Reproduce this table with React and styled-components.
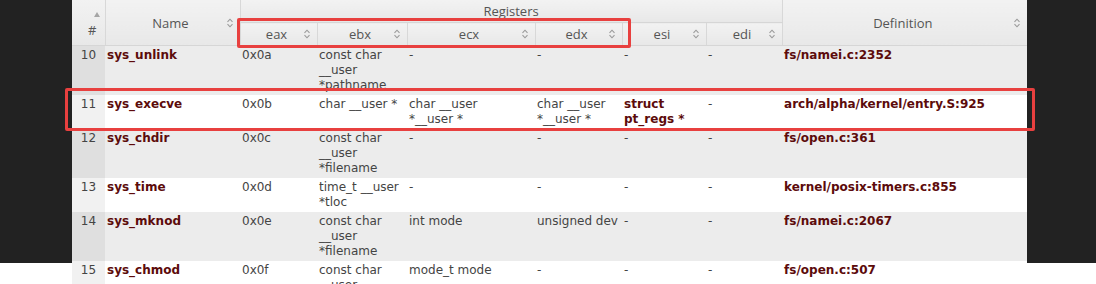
import React from 'react';
import styled, { createGlobalStyle } from 'styled-components';

const Global = createGlobalStyle`
  html, body { margin: 0; padding: 0; background: #fff; }
  body { font-family: "DejaVu Sans", Verdana, sans-serif; }
`;

const Stage = styled.div`
  position: relative;
  background: linear-gradient(to bottom, #222 0, #222 263px, #fff 263px, #fff 100%);
  padding-left: 72px;
  padding-bottom: 4px;
`;

const Table = styled.table`
  border-collapse: collapse;
  table-layout: fixed;
  width: 955px;
  font-family: "DejaVu Sans", Verdana, sans-serif;
  font-size: 12px;
  line-height: 15px;
  color: #444;

  tbody td:nth-child(5) {
    padding-right: 14px;
  }
`;

const Th = styled.th`
  background: linear-gradient(#f2f2f2, #e8e8e8);
  font-family: "Open Sans", "DejaVu Sans", sans-serif;
  font-weight: normal;
  font-size: 13px;
  line-height: 16px;
  color: #555;
  height: ${(p) => p.$h || 22}px;
  padding: 0;
  border-left: ${(p) => (p.$first ? 'none' : '1px solid #d8d8d8')};
  border-bottom: 1px solid #d6d6d6;
  vertical-align: middle;
  text-align: center;
`;

const HeadInner = styled.div`
  display: flex;
  align-items: center;
  padding: 0 6px 0 10px;
`;

const HeadLabel = styled.span`
  flex: 1;
  text-align: center;
  white-space: nowrap;
`;

const IndexHead = styled.div`
  display: flex;
  flex-direction: column;
  align-items: center;
  padding: 4px 0 0 8px;
  gap: 5px;
`;

const Asc = styled.span`
  width: 0;
  height: 0;
  margin-left: 9px;
  border-left: 3px solid transparent;
  border-right: 3px solid transparent;
  border-bottom: 5px solid #a5a5a5;
`;

const Tr = styled.tr`
  background: ${(p) => (p.$gray ? '#ececec' : '#fff')};
`;

const Td = styled.td`
  padding: 2px 2px;
  vertical-align: top;
  text-align: ${(p) => (p.$center ? 'center' : 'left')};
  font-weight: ${(p) => (p.$link ? 'bold' : 'normal')};
  color: ${(p) => (p.$link ? '#5c0b0b' : '#444')};
  background: ${(p) =>
    p.$sorted ? (p.$gray ? '#dfdfdf' : '#f1f1f1') : 'transparent'};
`;

const Mark = styled.div`
  position: absolute;
  box-sizing: border-box;
  left: ${(p) => p.$x}px;
  top: ${(p) => p.$y}px;
  width: ${(p) => p.$w}px;
  height: ${(p) => p.$h}px;
  border: 3px solid #e8403f;
  border-radius: 2px;
  pointer-events: none;
`;

const SortIcon = () => (
  <svg width="8" height="12" viewBox="0 0 8 12" fill="none">
    <path d="M1.5 4.8 L4 2.2 L6.5 4.8" stroke="#9a9a9a" strokeWidth="1.1" />
    <path d="M1.5 7.2 L4 9.8 L6.5 7.2" stroke="#9a9a9a" strokeWidth="1.1" />
  </svg>
);

const SortHead = ({ label, ...rest }) => (
  <Th {...rest}>
    <HeadInner>
      <HeadLabel>{label}</HeadLabel>
      <SortIcon />
    </HeadInner>
  </Th>
);

const widths = [33, 135, 77, 90, 128, 87, 84, 76, 245];
const regs = ['eax', 'ebx', 'ecx', 'edx', 'esi', 'edi'];

const rows = [
  { n: 10, name: 'sys_unlink', eax: '0x0a', args: ['const char __user *pathname', '-', '-', '-', '-'], def: 'fs/namei.c:2352' },
  { n: 11, name: 'sys_execve', eax: '0x0b', args: ['char __user *', 'char __user *__user *', 'char __user *__user *', { t: 'struct pt_regs *', link: true }, '-'], def: 'arch/alpha/kernel/entry.S:925' },
  { n: 12, name: 'sys_chdir', eax: '0x0c', args: ['const char __user *filename', '-', '-', '-', '-'], def: 'fs/open.c:361' },
  { n: 13, name: 'sys_time', eax: '0x0d', args: ['time_t __user *tloc', '-', '-', '-', '-'], def: 'kernel/posix-timers.c:855' },
  { n: 14, name: 'sys_mknod', eax: '0x0e', args: ['const char __user *filename', 'int mode', 'unsigned dev', '-', '-'], def: 'fs/namei.c:2067' },
  { n: 15, name: 'sys_chmod', eax: '0x0f', args: ['const char __user *filename', 'mode_t mode', '-', '-', '-'], def: 'fs/open.c:507' },
];

export default function App() {
  return (
    <>
      <Global />
      <Stage>
        <Table>
          <colgroup>
            {widths.map((w, i) => (
              <col key={i} style={{ width: w }} />
            ))}
          </colgroup>
          <thead>
            <tr>
              <Th rowSpan={2} $first $h={22}>
                <IndexHead>
                  <Asc />
                  <span>#</span>
                </IndexHead>
              </Th>
              <SortHead rowSpan={2} label="Name" />
              <Th colSpan={6} $h={22}>Registers</Th>
              <SortHead rowSpan={2} label="Definition" />
            </tr>
            <tr>
              {regs.map((r) => (
                <SortHead key={r} label={r} $h={22} />
              ))}
            </tr>
          </thead>
          <tbody>
            {rows.map((r, i) => {
              const gray = i % 2 === 0;
              return (
                <Tr key={r.n} $gray={gray}>
                  <Td $center $sorted $gray={gray}>{r.n}</Td>
                  <Td $link>{r.name}</Td>
                  <Td>{r.eax}</Td>
                  {r.args.map((a, j) =>
                    typeof a === 'string' ? (
                      <Td key={j}>{a}</Td>
                    ) : (
                      <Td key={j} $link={a.link}>{a.t}</Td>
                    )
                  )}
                  <Td $link>{r.def}</Td>
                </Tr>
              );
            })}
          </tbody>
        </Table>
        <Mark $x={237} $y={18} $w={394} $h={30} />
        <Mark $x={65} $y={88} $w={970} $h={43} />
      </Stage>
    </>
  );
}
